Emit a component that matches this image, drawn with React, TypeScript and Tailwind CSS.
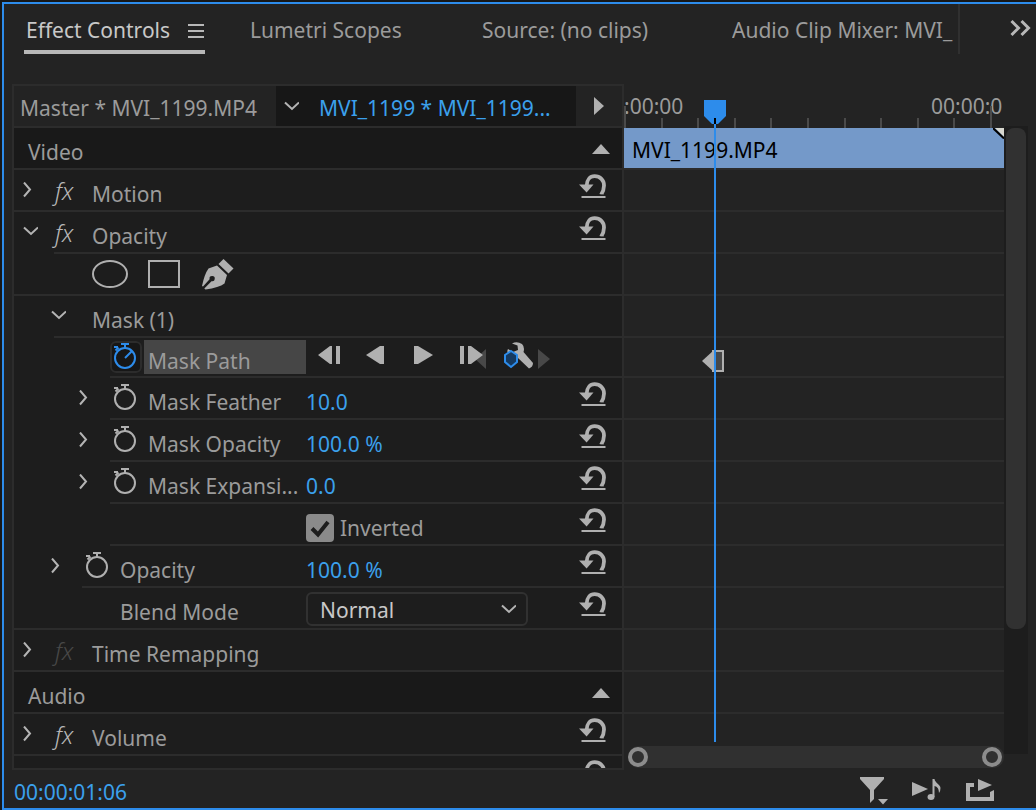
import { useState, type ReactNode } from "react";

const LINE = "bg-[#2c2c2c]";

function Chevron({ open = false }: { open?: boolean }) {
  return (
    <svg viewBox="0 0 16 16" className="h-4 w-4 shrink-0" fill="none" stroke="#b4b4b4" strokeWidth="2">
      <path d={open ? "M2 3.500 L9 10 L16 3.500" : "M2 0.500 L8 7.500 L2 14.500"} />
    </svg>
  );
}

function ResetButton({ label }: { label: string }) {
  return (
    <button type="button" aria-label={label} className="mr-4 ml-auto shrink-0 pb-2">
      <svg viewBox="0 0 27 25" className="h-[25px] w-[27px]">
        <path d="M7.6 12 C7.6 6 11 2.2 15.6 2.2 C21.2 2.2 25 6.2 25 11.5 C25 15.2 24 18 22 21" fill="none" stroke="#b0b0b0" strokeWidth="3.8" />
        <path d="M0 10.500 H14.5 L7.6 18.6 Z" fill="#b0b0b0" />
        <rect x="18" y="20.4" width="6" height="1.6" fill="#1d1d1d" />
        <rect x="2.5" y="22" width="24" height="2" fill="#b0b0b0" />
      </svg>
    </button>
  );
}

function Stopwatch({ label, on = false }: { label: string; on?: boolean }) {
  return (
    <button
      type="button"
      aria-label={label}
      aria-pressed={on}
      className={
        on
          ? "h-8 w-8 shrink-0 rounded-md bg-[#171717] text-[#2d8ceb] outline-2 -outline-offset-2 outline-[#2c2c2c]"
          : "h-8 w-8 shrink-0 text-[#b0b0b0]"
      }
    >
      <svg viewBox="0 0 32 32" className="h-8 w-8" fill="none" stroke="currentColor" strokeWidth="2">
        <circle cx="15" cy="17" r="10" />
        <path d="M11 3 H19 M15 3 V7" />
        <path d="M4 6 H8 M5.5 9.5 L8.5 6.5" />
        {on && <path d="M15 17 L22 10" />}
      </svg>
    </button>
  );
}

function Fx({ dim = false }: { dim?: boolean }) {
  return (
    <span
      className={
        dim
          ? "w-[22px] pt-px pl-px text-2xl font-light italic text-[#484848]"
          : "w-[22px] pt-px pl-px text-2xl font-light italic text-[#b8b8b8]"
      }
    >
      fx
    </span>
  );
}

function Section({ title }: { title: string }) {
  return (
    <div>
      <div className="flex h-10 items-center justify-between bg-[#191919] pr-3 pl-[14px]">
        <h2 className="pt-2">{title}</h2>
        <button type="button" aria-label={"Collapse " + title} className="pt-px">
          <svg viewBox="0 0 18 10" className="h-[10px] w-[18px]" fill="#b0b0b0">
            <path d="M9 0 L18 10 H0 Z" />
          </svg>
        </button>
      </div>
      <div className={`h-[2px] ${LINE}`} />
    </div>
  );
}

type RowProps = {
  head: ReactNode;
  children?: ReactNode;
  indent?: string;
  line?: string;
  height?: string;
  reset?: string;
};

function Row({ head, children, indent = "pl-2", line = "", height = "h-10", reset }: RowProps) {
  return (
    <div>
      <div className={`flex items-center ${height}`}>
        <div className={`flex w-[292px] shrink-0 items-center ${indent}`}>{head}</div>
        {children}
        {reset && <ResetButton label={reset} />}
      </div>
      <div className={`h-[2px] ${LINE} ${line}`} />
    </div>
  );
}

function EffectHead({ name, open, dim }: { name?: string; open?: boolean; dim?: boolean }) {
  return (
    <div className="flex items-center gap-4">
      <Chevron open={open} />
      <Fx dim={dim} />
      {name && <span className="pt-2">{name}</span>}
    </div>
  );
}

function ParamHead({ name }: { name: string }) {
  return (
    <>
      <Chevron />
      <span className="ml-4 flex">
        <Stopwatch label={"Toggle animation: " + name} />
      </span>
      <span className="ml-[6px] pt-2 whitespace-nowrap">{name}</span>
    </>
  );
}

function Value({ children }: { children: string }) {
  return (
    <button type="button" className="pt-2 text-[#3ba0ec]">
      {children}
    </button>
  );
}

function MaskTools() {
  return (
    <div className="flex items-center gap-5 pl-[70px]">
      <button type="button" aria-label="Create ellipse mask">
        <svg viewBox="0 0 36 28" className="h-7 w-9" fill="none" stroke="#b0b0b0" strokeWidth="2">
          <ellipse cx="18" cy="14" rx="17" ry="13" />
        </svg>
      </button>
      <button type="button" aria-label="Create 4-point polygon mask">
        <svg viewBox="0 0 32 28" className="h-7 w-8" fill="none" stroke="#b0b0b0" strokeWidth="2">
          <rect x="1" y="1" width="30" height="26" />
        </svg>
      </button>
      <button type="button" aria-label="Free draw bezier">
        <svg viewBox="0 0 34 32" className="h-8 w-[34px]" fill="#b0b0b0">
          <path d="M23.5 1 L33.5 10.5 L28.5 15.5 L18.5 6 Z" />
          <path d="M17 7.5 L27 17 L24.5 25.5 Q19 29.5 5.5 31.5 L4.3 30.6 L11.5 23.2 A2.6 2.6 0 1 0 9.6 21.2 L3 28.5 L2 28 Q4.500 16 8.500 10.500 Z" />
        </svg>
      </button>
    </div>
  );
}

function Transport() {
  return (
    <div className="flex items-center pb-1 pl-3">
      <div className="flex items-center gap-6">
        <button type="button" aria-label="Track mask backward one frame">
          <svg viewBox="0 0 24 28" className="h-7 w-6" fill="#b0b0b0">
            <path d="M14 5 V23 H12 L0 14 L12 5 Z M18 5 H22 V23 H18 Z" />
          </svg>
        </button>
        <button type="button" aria-label="Track mask backward">
          <svg viewBox="0 0 24 28" className="h-7 w-6" fill="#b0b0b0">
            <path d="M18 5 V23 H14 L0 14 L14 5 Z" />
          </svg>
        </button>
        <button type="button" aria-label="Track mask forward">
          <svg viewBox="0 0 24 28" className="h-7 w-6" fill="#b0b0b0">
            <path d="M0 5 H4 L19 14 L4 23 H0 Z" />
          </svg>
        </button>
        <button type="button" aria-label="Track mask forward one frame">
          <svg viewBox="2 0 28 28" className="h-7 w-7 overflow-visible">
            <path d="M26 8 V28 L15 18 Z" fill="#484848" />
            <path d="M0 5 H4 V23 H0 Z M8 5 H11 L23 14 L11 23 H8 Z" fill="#b0b0b0" />
          </svg>
        </button>
      </div>
      <button type="button" aria-label="Tracking method" className="ml-3">
        <svg viewBox="0 0 32 28" className="h-7 w-8">
          <path d="M10 2.500 Q15 0 20 3 Q23 6 21.500 11 L31 22 Q31 26 27 27.500 L16 17 L8 15 Q4 12 6 8 L11 11 L16 9 L15.500 4.500 Z" fill="#b0b0b0" />
          <path d="M9 10 L15 14 V21 L9 26 L3 21 V14 Z" fill="#15395f" stroke="#2d8ceb" strokeWidth="2" />
        </svg>
      </button>
      <button type="button" aria-label="Go to next keyframe" className="ml-1">
        <svg viewBox="0 0 16 28" className="h-7 w-4" fill="#484848">
          <path d="M0 8 L12 18 L0 28 Z" />
        </svg>
      </button>
    </div>
  );
}

function InvertedBox() {
  const [checked, setChecked] = useState(true);
  return (
    <label className="flex items-center gap-[6px] pt-2">
      <span className="relative flex">
        <input
          type="checkbox"
          checked={checked}
          onChange={(e) => setChecked(e.target.checked)}
          className="h-7 w-7 appearance-none rounded-[4px] bg-[#8a8a8a]"
        />
        {checked && (
          <svg viewBox="0 0 28 28" className="pointer-events-none absolute inset-0" fill="none" stroke="#1d1d1d" strokeWidth="4">
            <path d="M6 14.500 L12 20.500 L22 8" />
          </svg>
        )}
      </span>
      Inverted
    </label>
  );
}

function BlendMode() {
  return (
    <div className="relative w-[222px] pt-[2px]">
      <select
        id="blend"
        defaultValue="Normal"
        className="h-[34px] w-full appearance-none rounded-md border-2 border-[#313131] bg-[#1d1d1d] pt-[2px] pl-3 text-[#c8c8c8]"
      >
        <option>Normal</option>
        <option>Dissolve</option>
        <option>Multiply</option>
        <option>Screen</option>
      </select>
      <span className="pointer-events-none absolute inset-y-0 right-3 flex items-center pt-1">
        <Chevron open />
      </span>
    </div>
  );
}

function EffectList() {
  return (
    <div className="flex min-w-0 flex-col overflow-hidden border-2 border-[#2c2c2c] bg-[#1d1d1d]">
      <div className="flex h-10 shrink-0 items-stretch bg-[#232323]">
        <button type="button" className="w-[262px] shrink-0 pt-1 pl-[6px] text-left">
          Master * MVI_1199.MP4
        </button>
        <div className="flex min-w-0 flex-1 items-center bg-[#171717] pl-[7px]">
          <button type="button" aria-label="Choose clip" className="pt-px">
            <Chevron open />
          </button>
          <button type="button" className="ml-5 truncate pt-1 text-[#3ba0ec]">
            MVI_1199 * MVI_1199...
          </button>
        </div>
        <button type="button" aria-label="Show timeline view" className="w-[46px] shrink-0 pl-[18px]">
          <svg viewBox="0 0 10 18" className="h-[18px] w-[10px]" fill="#b0b0b0">
            <path d="M0 0 L10 9 L0 18 Z" />
          </svg>
        </button>
      </div>
      <div className={`h-[2px] shrink-0 ${LINE}`} />
      <div className="min-h-0 flex-1 overflow-hidden">
        <Section title="Video" />
        <Row head={<EffectHead name="Motion" />} reset="Reset Motion" />
        <Row head={<EffectHead name="Opacity" open />} line="ml-10" reset="Reset Opacity" />
        <Row head={<MaskTools />} />
        <Row
          indent="pl-9"
          line="ml-10"
          head={
            <>
              <Chevron open />
              <span className="pt-2 pl-[26px]">Mask (1)</span>
            </>
          }
        />
        <Row
          indent="pl-24"
          line="ml-24"
          height="h-[38px]"
          head={
            <>
              <Stopwatch label="Toggle animation: Mask Path" on />
              <span className="ml-[2px] flex h-[34px] flex-1 items-center bg-[#464646] pt-2 pl-1">Mask Path</span>
            </>
          }
        >
          <Transport />
        </Row>
        <Row indent="pl-16" line="ml-24" head={<ParamHead name="Mask Feather" />} reset="Reset Mask Feather">
          <Value>10.0</Value>
        </Row>
        <Row indent="pl-16" line="ml-24" head={<ParamHead name="Mask Opacity" />} reset="Reset Mask Opacity">
          <Value>100.0 %</Value>
        </Row>
        <Row indent="pl-16" line="ml-24" head={<ParamHead name="Mask Expansi..." />} reset="Reset Mask Expansion">
          <Value>0.0</Value>
        </Row>
        <Row line="ml-24" head={null} reset="Reset Inverted">
          <InvertedBox />
        </Row>
        <Row indent="pl-9" line="ml-[68px]" head={<ParamHead name="Opacity" />} reset="Reset Opacity value">
          <Value>100.0 %</Value>
        </Row>
        <Row
          indent="pl-[106px]"
          head={
            <label htmlFor="blend" className="pt-2">
              Blend Mode
            </label>
          }
          reset="Reset Blend Mode"
        >
          <BlendMode />
        </Row>
        <Row head={<EffectHead name="Time Remapping" dim />} />
        <Section title="Audio" />
        <Row head={<EffectHead name="Volume" />} reset="Reset Volume" />
        <Row head={<EffectHead />} reset="Reset effect" />
      </div>
    </div>
  );
}

const TICKS = [0, 1, 2, 3, 4, 5, 6, 7, 8, 9, 10];
const LANES = ["h-10", "h-10", "h-10", "h-10", "key", "h-10", "h-10", "h-10", "h-10", "h-10", "h-10", "h-10", "h-10", "h-10"];

function Keyframe() {
  return (
    <div className="flex h-[38px] items-center pt-2 pl-[78px]">
      <svg viewBox="0 0 22 22" className="h-[22px] w-[22px]">
        <path d="M12 0 V22 L0 11 Z" fill="#b0b0b0" />
        <rect x="11" y="1" width="10" height="20" fill="#484848" stroke="#b0b0b0" strokeWidth="2" />
      </svg>
    </div>
  );
}

function Timeline() {
  return (
    <div className="relative flex min-w-0 flex-col overflow-hidden">
      <div className="flex h-11 shrink-0 flex-col justify-end">
        <div className="flex justify-between overflow-hidden leading-6 whitespace-nowrap">
          <span>:00:00</span>
          <span className="w-[73px] overflow-hidden">00:00:0</span>
        </div>
        <div className="flex h-[10px] items-end justify-between pr-3">
          {TICKS.map((t) => (
            <span key={t} className={t % 10 ? "h-[10px] w-[2px] bg-[#4a4a4a]" : "h-[22px] w-[2px] bg-[#4a4a4a]"} />
          ))}
        </div>
      </div>
      <div className="flex h-10 shrink-0 items-start justify-between bg-[#7499c9] pl-2 text-black">
        <span className="leading-[44px]">MVI_1199.MP4</span>
        <svg viewBox="0 0 11 11" className="h-[11px] w-[11px]">
          <path d="M2 0 H11 V9 Z" fill="#d8d8d0" />
          <path d="M0 0 L11 10.500" stroke="#000" strokeWidth="2" />
        </svg>
      </div>
      <div className="min-h-0 flex-1 overflow-hidden">
        {LANES.map((lane, i) => (
          <div key={i}>
            <div className={`h-[2px] ${LINE}`} />
            {lane === "key" ? <Keyframe /> : <div className={lane} />}
          </div>
        ))}
      </div>
      <div className="flex h-6 shrink-0 pb-[2px] pl-1">
        <div className="flex flex-1 items-center justify-between rounded-full bg-[#303030] pr-[2px]">
          <span className="h-5 w-5 rounded-full border-4 border-[#8c8c8c]" />
          <span className="h-5 w-5 rounded-full border-4 border-[#8c8c8c]" />
        </div>
      </div>
      <div className="absolute top-4 bottom-7 left-20 flex w-[22px] flex-col items-center">
        <svg viewBox="0 0 22 24" className="h-6 w-[22px] shrink-0">
          <path d="M0 0 H22 V16 L14 24 H8 L0 16 Z" fill="#2d8ceb" />
          <path d="M10 18 H12 V24 H10 Z" fill="#000" />
        </svg>
        <span className="w-[2px] flex-1 bg-[#2d8ceb]" />
      </div>
    </div>
  );
}

function Tabs() {
  return (
    <nav className="flex h-[50px] items-start justify-between pr-1 pl-5">
      <div className="flex min-w-0 items-start overflow-hidden border-r-2 border-[#303030] whitespace-nowrap">
        <button type="button" className="flex h-[50px] w-[181px] shrink-0 items-start justify-between border-b-4 border-[#b8b8b8] pt-3 pl-[2px] text-[#c8c8c8]">
          Effect Controls
          <svg viewBox="0 0 17 28" className="h-7 w-[17px]" stroke="#b8b8b8" strokeWidth="2">
            <path d="M0 9 H16 M0 15 H16 M0 21 H16" />
          </svg>
        </button>
        <button type="button" className="ml-[45px] w-[232px] shrink-0 pt-3 text-left">Lumetri Scopes</button>
        <button type="button" className="w-[250px] shrink-0 pt-3 text-left">Source: (no clips)</button>
        <button type="button" className="w-[226px] overflow-hidden pt-3 text-left">Audio Clip Mixer: MVI_</button>
      </div>
      <button type="button" aria-label="More panels" className="pt-[15px]">
        <svg viewBox="0 0 22 18" className="h-[18px] w-[22px]" fill="none" stroke="#b8b8b8" strokeWidth="3">
          <path d="M1.500 2 L8.500 9 L1.500 16 M11.500 2 L18.500 9 L11.500 16" />
        </svg>
      </button>
    </nav>
  );
}

function Footer() {
  return (
    <footer className="flex h-[38px] items-center justify-between pr-[42px] pl-[10px]">
      <button type="button" className="pt-[6px] text-[#3ba0ec]">00:00:01:06</button>
      <div className="flex items-center gap-6 pt-[2px]">
        <button type="button" aria-label="Filter properties">
          <svg viewBox="0 0 28 30" className="h-[30px] w-7" fill="#b0b0b0">
            <path d="M0 2 H24 V4 L14 15 V24 L10 28 V15 L0 4 Z" />
            <path d="M18 24 H28 L23 29.500 Z" />
          </svg>
        </button>
        <button type="button" aria-label="Play audio only">
          <svg viewBox="0 0 30 24" className="h-6 w-[30px]" fill="#b0b0b0">
            <path d="M0 4 L16 11 L0 18 Z" />
            <ellipse cx="19" cy="19" rx="3.500" ry="3" />
            <path d="M20.500 1 H22.500 C23 5 28.500 6.500 28.500 10 Q28.500 13 27 15 Q27 9 22.500 8 V19 H20.500 Z" />
          </svg>
        </button>
        <button type="button" aria-label="Export frame">
          <svg viewBox="0 0 28 24" className="h-6 w-7" fill="#b0b0b0">
            <path d="M0 5 H8 V9 H4 V19 H24 V14 L28 12 V23 H0 Z" />
            <path d="M12 1 L26 7 L12 13 Z" />
          </svg>
        </button>
      </div>
    </footer>
  );
}

export default function App() {
  return (
    <div className="h-screen min-w-0 bg-[#171717] pt-[2px] pl-[2px]">
      <div className="flex h-full flex-col overflow-hidden border-t-2 border-b-2 border-l-2 border-[#2d8ceb] bg-[#232323] font-['Noto_Sans',sans-serif] text-[21px] leading-7 text-[#9b9b9b]">
        <Tabs />
        <main className="mt-[30px] grid min-h-0 flex-1 grid-cols-[153fr_95fr_24px] grid-rows-[minmax(0,1fr)] pr-2 pl-2">
          <EffectList />
          <Timeline />
          <div className="mt-[42px] mb-4 bg-[#1d1d1d] px-[2px] pt-[2px]">
            <div className="h-4/5 rounded-lg bg-[#313131]" />
          </div>
        </main>
        <Footer />
      </div>
    </div>
  );
}
